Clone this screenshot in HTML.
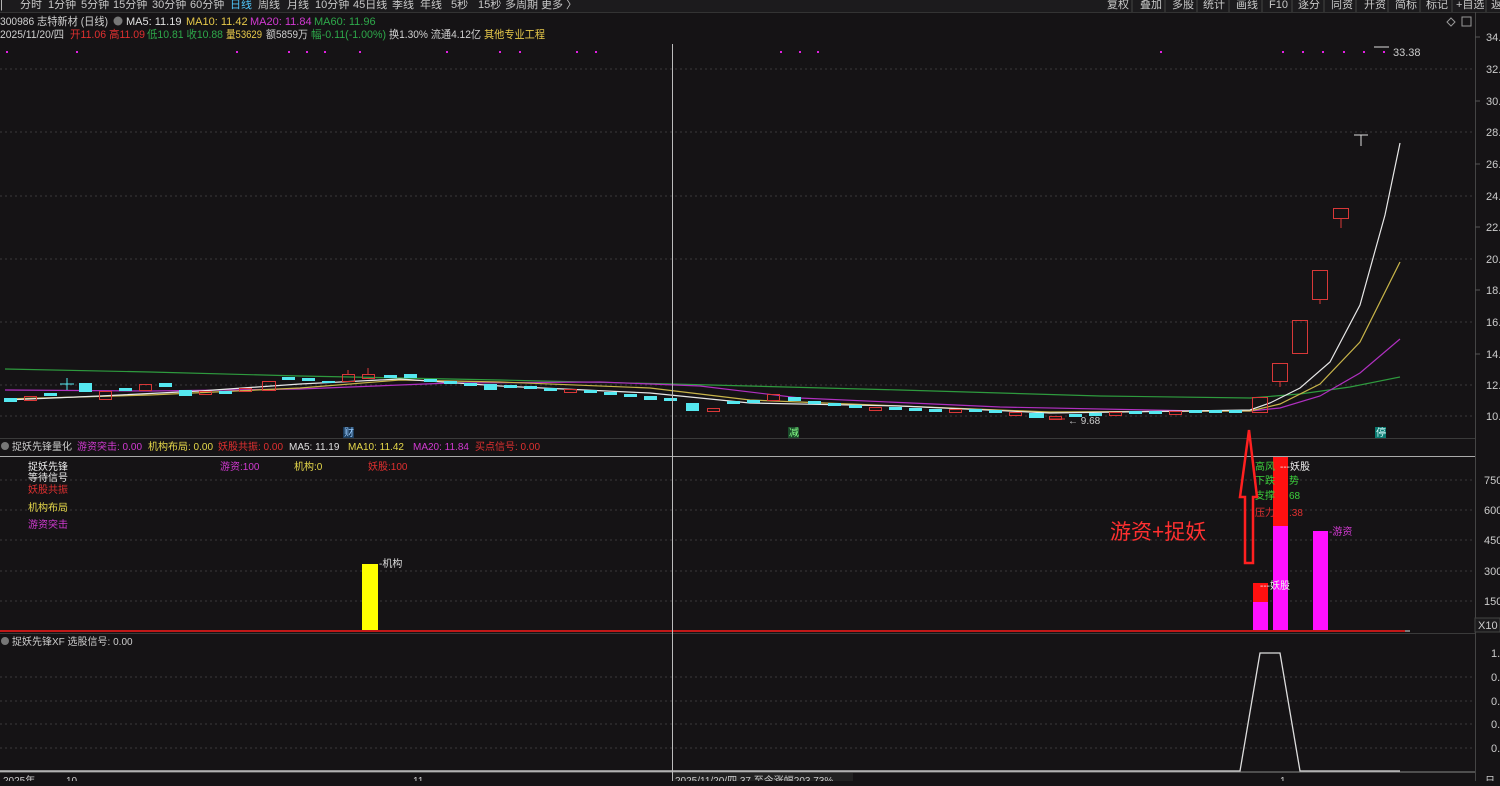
<!DOCTYPE html>
<html><head><meta charset="utf-8"><style>
html,body{margin:0;padding:0;background:#151315;}
body{width:1500px;height:781px;overflow:hidden;font-family:"Liberation Sans","Noto Sans CJK SC",sans-serif;}
svg text{font-family:"Liberation Sans","Noto Sans CJK SC",sans-serif;}
</style></head><body>
<svg width="1500" height="781" viewBox="0 0 1500 781" xmlns="http://www.w3.org/2000/svg">
<rect width="1500" height="781" fill="#151315"/>
<!-- toolbar -->
<rect x="0" y="0" width="1500" height="12" fill="#1c1b1d"/>
<line x1="0" y1="12.5" x2="1500" y2="12.5" stroke="#333" />
<g font-size="11" fill="#c8c8c8">
<text x="0" y="8">|</text><text x="20" y="8">分时</text><text x="48" y="8">1分钟</text><text x="81" y="8">5分钟</text><text x="113" y="8">15分钟</text><text x="152" y="8">30分钟</text><text x="190" y="8">60分钟</text>
<text x="230" y="8" fill="#4fc3f7">日线</text><text x="258" y="8">周线</text><text x="287" y="8">月线</text><text x="315" y="8">10分钟</text><text x="353" y="8">45日线</text><text x="392" y="8">季线</text><text x="420" y="8">年线</text><text x="451" y="8">5秒</text><text x="478" y="8">15秒</text><text x="505" y="8">多周期</text><text x="541" y="8">更多 〉</text>
<text x="1107" y="8">复权</text><text x="1140" y="8">叠加</text><text x="1172" y="8">多股</text><text x="1203" y="8">统计</text><text x="1236" y="8">画线</text><text x="1269" y="8">F10</text><text x="1298" y="8">逐分</text><text x="1331" y="8">同资</text><text x="1364" y="8">开资</text><text x="1395" y="8">简标</text><text x="1426" y="8">标记</text><text x="1456" y="8">+自选</text><text x="1491" y="8">返</text>
</g>
<g stroke="#444"><line x1="1132" y1="0" x2="1132" y2="12"/><line x1="1165" y1="0" x2="1165" y2="12"/><line x1="1197" y1="0" x2="1197" y2="12"/><line x1="1229" y1="0" x2="1229" y2="12"/><line x1="1262" y1="0" x2="1262" y2="12"/><line x1="1292" y1="0" x2="1292" y2="12"/><line x1="1324" y1="0" x2="1324" y2="12"/><line x1="1356" y1="0" x2="1356" y2="12"/><line x1="1388" y1="0" x2="1388" y2="12"/><line x1="1420" y1="0" x2="1420" y2="12"/><line x1="1452" y1="0" x2="1452" y2="12"/><line x1="1486" y1="0" x2="1486" y2="12"/></g>
<!-- info lines -->
<g font-size="11">
<text x="0" y="25" fill="#d0d0d0" textLength="108" lengthAdjust="spacingAndGlyphs">300986 志特新材 (日线)</text>
<circle cx="118" cy="21" r="4.5" fill="#777"/>
<text x="126" y="25" fill="#e0e0e0">MA5: 11.19</text>
<text x="186" y="25" fill="#e6c84a">MA10: 11.42</text>
<text x="250" y="25" fill="#d23ad2">MA20: 11.84</text>
<text x="314" y="25" fill="#2ea84a">MA60: 11.96</text>
<text x="0" y="38" fill="#d0d0d0" textLength="64" lengthAdjust="spacingAndGlyphs">2025/11/20/四</text>
<text x="70" y="38" fill="#e03030" textLength="75" lengthAdjust="spacingAndGlyphs">开11.06 高11.09</text>
<text x="147" y="38" fill="#2ea84a" textLength="76" lengthAdjust="spacingAndGlyphs">低10.81 收10.88</text>
<text x="226" y="38" fill="#e6c84a" textLength="36" lengthAdjust="spacingAndGlyphs">量53629</text>
<text x="266" y="38" fill="#d0d0d0" textLength="42" lengthAdjust="spacingAndGlyphs">额5859万</text>
<text x="311" y="38" fill="#2ea84a" textLength="75" lengthAdjust="spacingAndGlyphs">幅-0.11(-1.00%)</text>
<text x="389" y="38" fill="#d0d0d0" textLength="92" lengthAdjust="spacingAndGlyphs">换1.30% 流通4.12亿</text>
<text x="484" y="38" fill="#e6c84a" textLength="61" lengthAdjust="spacingAndGlyphs">其他专业工程</text>
</g>
<!-- diamond icons -->
<path d="M1451 18 l4 4 -4 4 -4 -4z" fill="none" stroke="#999"/>
<rect x="1462" y="17" width="9" height="9" fill="none" stroke="#999"/>
<!-- magenta dots -->
<g fill="#e020e0">
<rect x="6" y="51" width="2" height="2"/><rect x="76" y="51" width="2" height="2"/><rect x="236" y="51" width="2" height="2"/><rect x="288" y="51" width="2" height="2"/><rect x="306" y="51" width="2" height="2"/><rect x="324" y="51" width="2" height="2"/><rect x="359" y="51" width="2" height="2"/><rect x="446" y="51" width="2" height="2"/><rect x="499" y="51" width="2" height="2"/><rect x="519" y="51" width="2" height="2"/><rect x="576" y="51" width="2" height="2"/><rect x="595" y="51" width="2" height="2"/><rect x="780" y="51" width="2" height="2"/><rect x="799" y="51" width="2" height="2"/><rect x="817" y="51" width="2" height="2"/><rect x="1160" y="51" width="2" height="2"/><rect x="1282" y="51" width="2" height="2"/><rect x="1302" y="51" width="2" height="2"/><rect x="1322" y="51" width="2" height="2"/><rect x="1343" y="51" width="2" height="2"/><rect x="1363" y="51" width="2" height="2"/><rect x="1383" y="51" width="2" height="2"/>
</g>
<line x1="1374" y1="47" x2="1389" y2="47" stroke="#ddd"/>
<text x="1393" y="56" font-size="11" fill="#ccc">33.38</text>
<!-- right axis -->
<line x1="1475.5" y1="12" x2="1475.5" y2="781" stroke="#444"/>
<g font-size="11" fill="#ccc">
<text x="1486" y="41">34.</text><text x="1486" y="73">32.</text><text x="1486" y="105">30.</text><text x="1486" y="136">28.</text><text x="1486" y="168">26.</text><text x="1486" y="200">24.</text><text x="1486" y="231">22.</text><text x="1486" y="263">20.</text><text x="1486" y="294">18.</text><text x="1486" y="326">16.</text><text x="1486" y="358">14.</text><text x="1486" y="389">12.</text><text x="1486" y="420">10.</text>
<text x="1484" y="484">750</text><text x="1484" y="514">600</text><text x="1484" y="544">450</text><text x="1484" y="575">300</text><text x="1484" y="605">150</text>
<text x="1491" y="657">1.</text><text x="1491" y="681">0.</text><text x="1491" y="705">0.</text><text x="1491" y="728">0.</text><text x="1491" y="752">0.</text>
</g>
<rect x="1475" y="618" width="25" height="14" fill="#1c1b1d" stroke="#444"/>
<text x="1478" y="629" font-size="11" fill="#ccc">X10</text>
<!-- grids -->
<g stroke="#3a3a3a" stroke-dasharray="2,3">
<line x1="0" y1="69" x2="1475" y2="69"/><line x1="0" y1="132" x2="1475" y2="132"/><line x1="0" y1="196" x2="1475" y2="196"/><line x1="0" y1="259" x2="1475" y2="259"/><line x1="0" y1="322" x2="1475" y2="322"/><line x1="0" y1="385" x2="1475" y2="385"/><line x1="0" y1="416" x2="1475" y2="416"/>
<line x1="0" y1="480" x2="1475" y2="480"/><line x1="0" y1="510" x2="1475" y2="510"/><line x1="0" y1="540" x2="1475" y2="540"/><line x1="0" y1="571" x2="1475" y2="571"/><line x1="0" y1="601" x2="1475" y2="601"/>
<line x1="0" y1="677" x2="1475" y2="677"/><line x1="0" y1="701" x2="1475" y2="701"/><line x1="0" y1="724" x2="1475" y2="724"/><line x1="0" y1="748" x2="1475" y2="748"/>
</g>
<g stroke="#555"><line x1="1475" y1="37" x2="1480" y2="37"/><line x1="1475" y1="101" x2="1480" y2="101"/><line x1="1475" y1="164" x2="1480" y2="164"/><line x1="1475" y1="227" x2="1480" y2="227"/><line x1="1475" y1="290" x2="1480" y2="290"/><line x1="1475" y1="354" x2="1480" y2="354"/></g>
<!-- MA lines main -->
<polyline fill="none" stroke="#2e9a3e" stroke-width="1.2" points="5,369 150,372 300,376 500,380 672,384 900,390 1100,396 1250,398 1300,394 1350,387 1400,377"/>
<polyline fill="none" stroke="#b030c0" stroke-width="1.2" points="5,390 150,391 300,389 450,383 600,382 700,386 800,398 1000,407 1200,411 1250,411 1280,408 1320,396 1360,373 1400,339"/>
<polyline fill="none" stroke="#c8b44a" stroke-width="1.2" points="5,399 150,395 300,388 400,380 500,382 650,388 750,400 900,406 1050,412 1250,411 1280,404 1320,384 1360,342 1400,262"/>
<polyline fill="none" stroke="#e8e8e8" stroke-width="1.2" points="5,400 100,396 200,391 300,384 400,379 500,386 650,393 750,403 900,406 1050,413 1250,410 1270,403 1300,388 1330,362 1360,305 1385,215 1400,143"/>
<!-- candles -->
<g fill="#55e8f0">
<rect x="4" y="398" width="13" height="4"/><rect x="44" y="393" width="13" height="3"/><rect x="79" y="383" width="13" height="9"/><rect x="119" y="388" width="13" height="3"/><rect x="159" y="383" width="13" height="4"/><rect x="179" y="390" width="13" height="6"/><rect x="219" y="391" width="13" height="3"/><rect x="282" y="377" width="13" height="3"/><rect x="302" y="378" width="13" height="3"/><rect x="322" y="381" width="13" height="2"/><rect x="384" y="375" width="13" height="3"/><rect x="404" y="374" width="13" height="4"/><rect x="424" y="379" width="13" height="3"/><rect x="444" y="381" width="13" height="3"/><rect x="464" y="383" width="13" height="3"/><rect x="484" y="384" width="13" height="6"/><rect x="504" y="385" width="13" height="3"/><rect x="524" y="386" width="13" height="3"/><rect x="544" y="388" width="13" height="3"/><rect x="584" y="390" width="13" height="3"/><rect x="604" y="392" width="13" height="3"/><rect x="624" y="394" width="13" height="3"/><rect x="644" y="396" width="13" height="4"/><rect x="664" y="398" width="13" height="3"/><rect x="686" y="403" width="13" height="8"/><rect x="727" y="401" width="13" height="3"/><rect x="747" y="400" width="13" height="3"/><rect x="788" y="397" width="13" height="4"/><rect x="808" y="401" width="13" height="3"/><rect x="828" y="403" width="13" height="3"/><rect x="849" y="405" width="13" height="3"/><rect x="889" y="407" width="13" height="3"/><rect x="909" y="408" width="13" height="3"/><rect x="929" y="409" width="13" height="3"/><rect x="969" y="409" width="13" height="3"/><rect x="989" y="410" width="13" height="3"/><rect x="1029" y="413" width="15" height="5"/><rect x="1069" y="414" width="13" height="3"/><rect x="1089" y="413" width="13" height="3"/><rect x="1129" y="411" width="13" height="3"/><rect x="1149" y="411" width="13" height="3"/><rect x="1189" y="410" width="13" height="3"/><rect x="1209" y="410" width="13" height="3"/><rect x="1229" y="410" width="13" height="3"/>
</g>
<g stroke="#55e8f0"><line x1="67" y1="378" x2="67" y2="390"/><line x1="60" y1="384" x2="74" y2="384"/></g>
<g fill="none" stroke="#d83838">
<rect x="24.5" y="396.5" width="12" height="4"/><rect x="99.5" y="391.5" width="12" height="8"/><rect x="139.5" y="384.5" width="12" height="6"/><rect x="199.5" y="391.5" width="12" height="3"/><rect x="239.5" y="388.5" width="12" height="3"/><rect x="262.5" y="381.5" width="13" height="9"/><rect x="342.5" y="374.5" width="12" height="7"/><rect x="362.5" y="374.5" width="12" height="4"/><rect x="564.5" y="389.5" width="12" height="3"/><rect x="707.5" y="408.5" width="12" height="3"/><rect x="767.5" y="394.5" width="12" height="6"/><rect x="869.5" y="407.5" width="12" height="3"/><rect x="949.5" y="409.5" width="12" height="3"/><rect x="1009.5" y="412.5" width="12" height="3"/><rect x="1049.5" y="416.5" width="12" height="3"/><rect x="1109.5" y="412.5" width="12" height="3"/><rect x="1169.5" y="411.5" width="12" height="3"/>
<rect x="1252.5" y="397.5" width="15" height="15"/><rect x="1272.5" y="363.5" width="15" height="18"/><rect x="1292.5" y="320.5" width="15" height="33"/><rect x="1312.5" y="270.5" width="15" height="29"/><rect x="1333.5" y="208.5" width="15" height="10"/>
<line x1="348" y1="370" x2="348" y2="375"/><line x1="368" y1="368" x2="368" y2="375"/><line x1="1280" y1="381" x2="1280" y2="387"/><line x1="1320" y1="300" x2="1320" y2="304"/><line x1="1341" y1="219" x2="1341" y2="228"/>
</g>
<g stroke="#ddd"><line x1="1354" y1="135" x2="1368" y2="135"/><line x1="1361" y1="135" x2="1361" y2="146"/></g>
<text x="1068" y="424" font-size="10" fill="#ccc">← 9.68</text>
<line x1="1050" y1="419" x2="1065" y2="419" stroke="#e03030"/>
<rect x="343" y="427" width="11" height="11" fill="#1a3a5a"/><text x="344" y="436" font-size="10" fill="#9cf">财</text>
<rect x="788" y="427" width="11" height="11" fill="#1a4a2a"/><text x="789" y="436" font-size="10" fill="#8f8">减</text>
<rect x="1375" y="427" width="11" height="11" fill="#0a7a70"/><text x="1376" y="436" font-size="10" fill="#dff">停</text>
<!-- separators -->
<line x1="0" y1="438.5" x2="1475" y2="438.5" stroke="#3a3a3a"/>
<line x1="0" y1="456.5" x2="1475" y2="456.5" stroke="#aaa"/>
<!-- indicator header -->
<g font-size="10">
<circle cx="5" cy="446" r="4" fill="#777"/>
<text x="12" y="450" fill="#ccc">捉妖先锋量化</text>
<text x="77" y="450" fill="#d23ad2">游资突击: 0.00</text>
<text x="148" y="450" fill="#e6d84a">机构布局: 0.00</text>
<text x="218" y="450" fill="#e03030">妖股共振: 0.00</text>
<text x="289" y="450" fill="#e0e0e0">MA5: 11.19</text>
<text x="348" y="450" fill="#e6d84a">MA10: 11.42</text>
<text x="413" y="450" fill="#d23ad2">MA20: 11.84</text>
<text x="475" y="450" fill="#e03030">买点信号: 0.00</text>
<text x="28" y="470" fill="#eee">捉妖先锋</text>
<text x="28" y="481" fill="#eee">等待信号</text>
<text x="28" y="493" fill="#e03030">妖股共振</text>
<text x="28" y="511" fill="#e6d84a">机构布局</text>
<text x="28" y="528" fill="#d23ad2">游资突击</text>
<text x="220" y="470" fill="#d23ad2">游资:100</text>
<text x="294" y="470" fill="#e6d84a">机构:0</text>
<text x="368" y="470" fill="#e03030">妖股:100</text>
</g>
<!-- volume bars -->
<rect x="362" y="564" width="16" height="68" fill="#ffff00"/>
<text x="379" y="567" font-size="10" fill="#ddd">-机构</text>
<rect x="1253" y="583" width="15" height="19" fill="#ff1010"/><rect x="1253" y="602" width="15" height="30" fill="#ff10ff"/>
<rect x="1273" y="457" width="15" height="69" fill="#ff1010"/><rect x="1273" y="526" width="15" height="106" fill="#ff10ff"/>
<rect x="1313" y="531" width="15" height="101" fill="#ff10ff"/>
<g font-size="10">
<text x="1260" y="589" fill="#eee">---妖股</text>
<text x="1280" y="470" fill="#eee">---妖股</text>
<text x="1329" y="535" fill="#d23ad2">-游资</text>
<text x="1255" y="470" fill="#3cd03c">高风</text>
<text x="1255" y="484" fill="#3cd03c">下跌</text><text x="1289" y="484" fill="#3cd03c">势</text>
<text x="1255" y="499" fill="#3cd03c">支撑</text><text x="1289" y="499" fill="#3cd03c">68</text>
<text x="1255" y="516" fill="#e03030">压力</text><text x="1289" y="516" fill="#e03030">.38</text>
</g>
<line x1="0" y1="631" x2="1405" y2="631" stroke="#c01818" stroke-width="2"/>
<line x1="1405" y1="631" x2="1410" y2="631" stroke="#ddd"/>
<!-- big arrow -->
<path d="M1249 430 L1257 497 L1253 497 L1253 563 L1245 563 L1245 497 L1240 497 Z" fill="none" stroke="#ff2020" stroke-width="2.5" stroke-linejoin="miter"/>
<text x="1110" y="539" font-size="21" fill="#ff3030">游资+捉妖</text>
<!-- third panel -->
<line x1="0" y1="633.5" x2="1475" y2="633.5" stroke="#3a3a3a"/>
<circle cx="5" cy="641" r="4" fill="#777"/>
<text x="12" y="645" font-size="10" fill="#ccc">捉妖先锋XF  选股信号: 0.00</text>
<polyline fill="none" stroke="#ddd" stroke-width="1.3" points="0,771 1240,771 1260,653 1280,653 1300,771 1400,771"/>
<line x1="0" y1="772" x2="1475" y2="772" stroke="#888"/>
<!-- crosshair -->
<line x1="672.5" y1="44" x2="672.5" y2="781" stroke="#bbb"/>
<!-- bottom axis -->
<g font-size="10" fill="#ccc"><text x="3" y="784">2025年</text><text x="66" y="784">10</text><text x="413" y="784">11</text><text x="1280" y="784">1</text><text x="1485" y="784">日</text></g>
<rect x="673" y="773" width="180" height="8" fill="#222"/>
<text x="675" y="784" font-size="10" fill="#ccc">2025/11/20/四 37 至今涨幅203.73%</text>
</svg>
</body></html>
